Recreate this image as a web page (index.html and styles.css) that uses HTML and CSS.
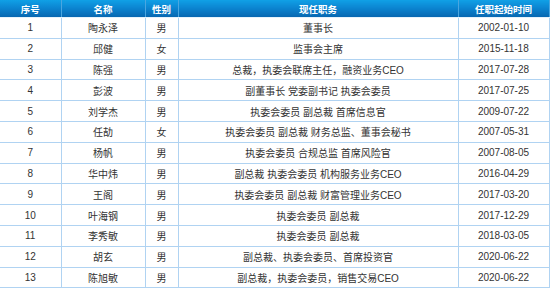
FILE: index.html
```html
<!DOCTYPE html>
<html lang="zh-CN">
<head>
<meta charset="utf-8">
<link rel="stylesheet" href="styles.css">
</head>
<body>
<table class="exec-table">
  <colgroup>
    <col class="c-no"><col class="c-name"><col class="c-sex"><col class="c-role"><col class="c-date">
  </colgroup>
  <thead>
    <tr><th>序号</th><th>名称</th><th>性别</th><th>现任职务</th><th>任职起始时间</th></tr>
  </thead>
  <tbody>
    <tr><td>1</td><td>陶永泽</td><td>男</td><td>董事长</td><td>2002-01-10</td></tr>
    <tr><td>2</td><td>邱健</td><td>女</td><td>监事会主席</td><td>2015-11-18</td></tr>
    <tr><td>3</td><td>陈强</td><td>男</td><td>总裁，执委会联席主任，融资业务CEO</td><td>2017-07-28</td></tr>
    <tr><td>4</td><td>彭波</td><td>男</td><td>副董事长 党委副书记 执委会委员</td><td>2017-07-25</td></tr>
    <tr><td>5</td><td>刘学杰</td><td>男</td><td>执委会委员 副总裁 首席信息官</td><td>2009-07-22</td></tr>
    <tr><td>6</td><td>任劼</td><td>女</td><td>执委会委员 副总裁 财务总监、董事会秘书</td><td>2007-05-31</td></tr>
    <tr><td>7</td><td>杨帆</td><td>男</td><td>执委会委员 合规总监 首席风险官</td><td>2007-08-05</td></tr>
    <tr><td>8</td><td>华中炜</td><td>男</td><td>副总裁 执委会委员 机构服务业务CEO</td><td>2016-04-29</td></tr>
    <tr><td>9</td><td>王阁</td><td>男</td><td>执委会委员 副总裁 财富管理业务CEO</td><td>2017-03-20</td></tr>
    <tr><td>10</td><td>叶海钢</td><td>男</td><td>执委会委员 副总裁</td><td>2017-12-29</td></tr>
    <tr><td>11</td><td>李秀敏</td><td>男</td><td>执委会委员 副总裁</td><td>2018-03-05</td></tr>
    <tr><td>12</td><td>胡玄</td><td>男</td><td>副总裁、执委会委员、首席投资官</td><td>2020-06-22</td></tr>
    <tr><td>13</td><td>陈旭敏</td><td>男</td><td>副总裁，执委会委员，销售交易CEO</td><td>2020-06-22</td></tr>
  </tbody>
</table>
</body>
</html>
```
FILE: styles.css
```css
html, body {
  margin: 0;
  padding: 0;
  background: #ffffff;
}
.exec-table {
  border-collapse: collapse;
  table-layout: fixed;
  width: 549px;
  font-family: "Liberation Sans", "Noto Sans CJK SC", sans-serif;
  font-size: 10px;
  color: #333333;
}
.c-no { width: 61px; }
.c-name { width: 84px; }
.c-sex { width: 33px; }
.c-role { width: 280px; }
.c-date { width: 91px; }
.exec-table th {
  height: 17px;
  padding: 0;
  color: #ffffff;
  font-weight: bold;
  font-size: 9.5px;
  text-align: center;
  background: linear-gradient(to bottom, #10a0e6 0%, #0b83cf 50%, #0867b1 100%);
  border-left: 1px solid #4aa6e0;
  border-right: 1px solid #4aa6e0;
  border-bottom: 1px solid #e6f2fb;
}
.exec-table th:first-child { border-left: none; }
.exec-table td {
  height: 19.8px;
  padding: 0;
  text-align: center;
  white-space: nowrap;
  border: 1px solid #b0d3f2;
}
.exec-table td:first-child { border-left: none; }
.exec-table tbody tr:last-child td { border-bottom: 2px solid #b0d3f2; }
```
